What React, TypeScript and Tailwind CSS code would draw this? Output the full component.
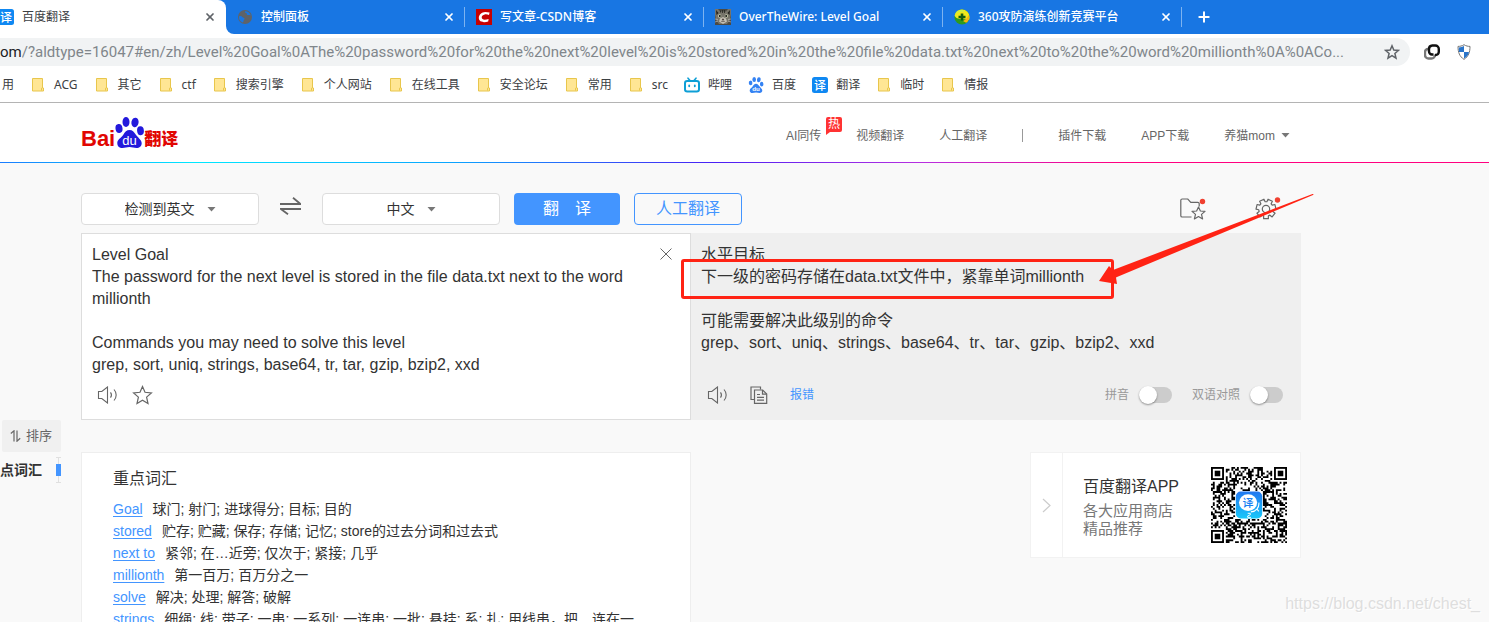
import React from "react";
import { Plus, X } from "lucide-react";

const uiFont = "font-['Noto_Sans','Noto_Sans_CJK_SC',sans-serif]";
const pageFont = "font-['Liberation_Sans','Noto_Sans_CJK_SC',sans-serif]";

/* ---------- Icons ---------- */

function TranslateFavicon() {
  return (
    <svg viewBox="0 0 16 16" className="size-4 shrink-0" aria-hidden="true">
      <rect width="16" height="16" rx="2.5" fill="#0f88f2" />
      <text x="8" y="12.5" textAnchor="middle" fontSize="12" fontWeight="500" fill="#fff" fontFamily="Noto Sans CJK SC">译</text>
    </svg>
  );
}

function GlobeFavicon() {
  return (
    <svg viewBox="0 0 16 16" className="size-4 shrink-0" aria-hidden="true">
      <circle cx="8" cy="8" r="7" fill="#5f6368" />
      <path d="M2 7.500c1.500-.8 2.600-.3 3.300.6.700.9 2 .6 2.200 1.600.2 1-.9 1.200-1 2.200 0 .7-.2 1.200-.7 1.700A6 6 0 0 1 2 7.500ZM8.300 2.200c-1 .9-.2 1.500.8 1.700.9.200.3 1.600 1.300 2 1 .400 1.500-.2 2.500.1.400.1.700.3.900.5A6 6 0 0 0 8.300 2.200Z" fill="#1876e3" />
    </svg>
  );
}

function CsdnFavicon() {
  return (
    <svg viewBox="0 0 16 16" className="size-4 shrink-0" aria-hidden="true">
      <rect width="16" height="16" fill="#c80000" />
      <path d="M13.600 3.600 13 6c-1.500-.6-3-.8-4.300-.5C7 5.900 5.800 7 5.700 8.300c-.1 1.700 1.300 2.400 3 2.400 1.200 0 2.500-.2 3.900-.7L12.200 12.500c-1.300.5-2.600.7-4 .7-3.200 0-5.600-1.700-5.400-4.700C3 5.300 5.800 3 9.200 2.900c1.600 0 3 .2 4.400.7Z" fill="#fff" />
    </svg>
  );
}

function CatFavicon() {
  return (
    <svg viewBox="0 0 16 16" className="size-4 shrink-0" aria-hidden="true">
      <rect width="16" height="16" fill="#4c4a44" />
      <path d="M0 0h3l2 2.500h6L13 0h3v5l-1 6-3 4H4l-3-4-1-6Z" fill="#77746a" />
      <path d="M1 1l2.500 3L1.500 6ZM15 1l-2.500 3 2 2ZM7 1h.8v3H7ZM9 1h.8v3H9ZM5 1.500h.8v2H5Z" fill="#24231f" />
      <path d="M5 9.500 8 8l3 1.500 1 3L8 15l-4-2.500Z" fill="#c4c0b4" />
      <circle cx="4.600" cy="7" r="1.700" fill="#c9cdb0" />
      <circle cx="11.400" cy="7" r="1.700" fill="#c9cdb0" />
      <circle cx="4.800" cy="7" r="1" fill="#111" />
      <circle cx="11.200" cy="7" r="1" fill="#111" />
      <path d="M7 10h2l-1 1.300ZM6 12.500l2-.6 2 .6" fill="#3a2c28" stroke="#3a2c28" strokeWidth=".4" />
      <path d="M0 10l3 .5M0 13l3-1M16 10l-3 .5M16 13l-3-1" stroke="#ddd" strokeWidth=".5" />
    </svg>
  );
}

function Favicon360() {
  return (
    <svg viewBox="0 0 16 16" className="size-4 shrink-0" aria-hidden="true">
      <circle cx="8" cy="8" r="7.600" fill="#2f9a1c" />
      <path d="M8 .4a7.600 7.600 0 0 1 7.600 7.600c0 1-.2 2-.6 3C13 9.500 11 10.500 8 10.300 4.500 10 1.200 9 .6 6.500A7.600 7.600 0 0 1 8 .4Z" fill="#f0e81c" />
      <path d="M8 .8C4.500.8 1.800 3.200 1 6c1.600-3 5.600-3.800 9.500-3C9.500 1.300 8.800.8 8 .8Z" fill="#c8f04a" />
      <path d="M13 13.500c2-2 2.600-5.500 1.600-8-.6 3-2.600 5-5.600 6.500 1 1 3 1.700 4 1.500Z" fill="#f6b40c" />
      <path d="M6.700 4.500h2.600v2.200h2.200v2.600H9.300v2.200H6.700V9.300H4.500V6.700h2.200Z" fill="#155c10" />
    </svg>
  );
}

function FolderIcon() {
  return (
    <svg viewBox="0 0 16 16" className="size-4 shrink-0" aria-hidden="true">
      <path d="M2.500 1.500h10v9.500h1v3h-11Z" fill="#ffe694" stroke="#e8c64c" />
      <path d="M11.500 13.500v-2.300l1-.9" fill="none" stroke="#e8c64c" />
    </svg>
  );
}

function BiliIcon() {
  return (
    <svg viewBox="0 0 16 16" className="size-4 shrink-0" aria-hidden="true" fill="none" stroke="#0e9fd6" strokeWidth="2" strokeLinecap="round">
      <rect x="1" y="4" width="14" height="10.500" rx="2.200" />
      <path d="M4 1.200 6 3.500M12 1.200l-2 2.300" strokeWidth="1.600" />
      <path d="M5.200 8.300v1M10.800 8.300v1" strokeWidth="1.800" />
    </svg>
  );
}

function PawShape({ color }: { color: string }) {
  return (
    <g fill={color}>
      <ellipse cx="4" cy="11.500" rx="3.500" ry="4.500" transform="rotate(-8 4 11.500)" />
      <ellipse cx="11" cy="5" rx="3.500" ry="4.900" />
      <ellipse cx="20" cy="5.400" rx="3.600" ry="4.800" transform="rotate(10 20 5.400)" />
      <ellipse cx="25.500" cy="13.700" rx="3.400" ry="4.500" transform="rotate(-5 25.500 13.700)" />
      <path d="M14.500 13c3 0 4.500 2 6.200 4.600 1.800 2.800 6 5.400 6 8.600 0 3-2.200 4.800-5.200 4.800-2.500 0-4.500-.9-7-.9s-4.500.9-7 .9c-3.300 0-5.300-2-5.200-5 0-3.200 3.700-5 6-8.200C10 15 11.600 13 14.500 13Z" />
    </g>
  );
}

function BaiduIcon() {
  return (
    <svg viewBox="0 0 29 31" className="size-4 shrink-0" aria-hidden="true">
      <PawShape color="#3482f3" />
      <text x="14.500" y="28" textAnchor="middle" fontSize="12" fontWeight="700" fill="#fff" fontFamily="Liberation Sans">du</text>
    </svg>
  );
}

function Caret() {
  return (
    <svg viewBox="0 0 9 5" className="h-[5px] w-[9px] shrink-0" aria-hidden="true">
      <path d="M.5 0h8l-4 4.500Z" fill="#777" />
    </svg>
  );
}

const starPath = "M10.500 1.500 13 7.300l6.400.6-4.800 4.200 1.400 6.400-5.500-3.300L5 18.500l1.400-6.400L1.600 7.900 8 7.300Z";

function StarIcon() {
  return (
    <svg viewBox="0 0 21 20" className="h-5 w-[21px]" aria-hidden="true">
      <path d={starPath} fill="none" stroke="#666" strokeWidth="1.200" />
    </svg>
  );
}

function SpeakerIcon() {
  return (
    <svg viewBox="0 0 21 18" className="h-[18px] w-[21px]" aria-hidden="true" fill="none" stroke="#666" strokeWidth="1.100">
      <path d="M1.500 5.500h3.300L10.500 1v16l-5.700-4.500H1.500Z" />
      <path d="M13.500 6.300c1.200 1.600 1.200 3.800 0 5.400M17 3.500c2.900 3.200 2.900 7.800 0 11" />
    </svg>
  );
}

function CopyIcon() {
  return (
    <svg viewBox="0 0 18 18" className="size-[18px]" aria-hidden="true" fill="none" stroke="#666" strokeWidth="1.200">
      <path d="M4 13.500H1V1h9.500v2.500" />
      <path d="M4.500 4h8.200l4 4v9.300H4.500Z" />
      <path d="M12.500 4v4.200h4M7 8.500h3M7 11.300h7M7 14.200h7" />
    </svg>
  );
}

function FolderStarIcon() {
  return (
    <svg viewBox="0 0 27 22" className="h-[22px] w-[27px]" aria-hidden="true" fill="none" stroke="#666" strokeWidth="1.200">
      <path d="M11.500 19H2.200C1.300 19 .8 18.500.8 17.700V2.300C.8 1.500 1.300 1 2.200 1h5.600l3 3.300h7c.9 0 1.400.5 1.400 1.300v2.900" />
      <path d="m18.500 9 1.900 4 4.600.4-3.500 3 1.100 4.500-4.100-2.400-4.100 2.400 1.100-4.500-3.500-3 4.600-.4Z" strokeLinejoin="round" />
      <circle cx="22.500" cy="3.500" r="2.700" fill="#f04030" stroke="none" />
    </svg>
  );
}

/* Seven-toothed gear outline, computed once. */
function gearPath() {
  const pts: string[] = [];
  for (let i = 0; i < 7; i++) {
    const base = -Math.PI / 2 + Math.PI / 7 + (i * 2 * Math.PI) / 7;
    const corners: [number, number][] = [[-0.33, 7.3], [-0.24, 10], [0.24, 10], [0.33, 7.3]];
    for (const [a, r] of corners) {
      pts.push(`${(11 + r * Math.cos(base + a)).toFixed(2)} ${(12 + r * Math.sin(base + a)).toFixed(2)}`);
    }
  }
  return `M${pts.join("L")}Z`;
}

function GearIcon() {
  return (
    <svg viewBox="0 0 27 24" className="h-6 w-[27px]" aria-hidden="true" fill="none" stroke="#666" strokeWidth="1.200" strokeLinejoin="round">
      <path d={gearPath()} />
      <circle cx="11" cy="12" r="3.700" />
      <circle cx="22.500" cy="3" r="2.700" fill="#f04030" stroke="none" />
    </svg>
  );
}

/* ---------- Browser chrome ---------- */

const tabs = [
  { title: "控制面板", icon: <GlobeFavicon /> },
  { title: "写文章-CSDN博客", icon: <CsdnFavicon /> },
  { title: "OverTheWire: Level Goal", icon: <CatFavicon /> },
  { title: "360攻防演练创新竞赛平台", icon: <Favicon360 /> },
];

function TabStrip() {
  return (
    <div className="flex h-[34px] text-xs" role="tablist">
      <div className="w-[226px] shrink-0 bg-[#1876e3]">
        <div role="tab" aria-selected="true" className="flex h-full items-center gap-2 rounded-tr-lg bg-white pr-[10px] text-[#3c4043]">
          <span className="flex w-[14px] shrink-0 justify-end overflow-hidden"><TranslateFavicon /></span>
          <span className="flex-1 truncate">百度翻译</span>
          <button aria-label="关闭"><X size={12} strokeWidth={3.500} color="#5f6368" /></button>
        </div>
      </div>
      <div className="flex-1 bg-white">
        <div className="flex h-full items-center rounded-bl-lg bg-[#1876e3] text-white">
          {tabs.map((t) => (
            <div key={t.title} role="tab" aria-selected="false" className="flex h-5 w-[239px] items-center gap-2 border-r border-[#7db3f0] pr-[9px] pl-[11px]">
              {t.icon}
              <span className="flex-1 truncate font-medium">{t.title}</span>
              <button aria-label="关闭"><X size={12} strokeWidth={3.500} /></button>
            </div>
          ))}
          <button aria-label="新标签页" className="ml-[14px]"><Plus size={16} strokeWidth={3} /></button>
        </div>
      </div>
    </div>
  );
}

const url =
  "/?aldtype=16047#en/zh/Level%20Goal%0AThe%20password%20for%20the%20next%20level%20is%20stored%20in%20the%20file%20data.txt%20next%20to%20the%20word%20millionth%0A%0ACo...";

function AddressBar() {
  return (
    <div className="flex h-9 items-center bg-white">
      <div className="flex h-7 flex-1 items-center rounded-r-full bg-[#f1f3f4] pr-[10px] font-['Roboto',sans-serif] text-[15px]">
        <label htmlFor="url" className="text-[#202124]">om</label>
        <input id="url" className="min-w-0 flex-1 bg-transparent text-[#80868b] outline-none" defaultValue={url} />
        <button aria-label="收藏" className="ml-2">
          <svg viewBox="0 0 16 16" className="size-4">
            <path d="M8 1.800 9.800 6l4.700.4-3.600 3.100 1.100 4.600L8 11.700 4 14.100l1.100-4.600L1.500 6.400 6.200 6Z" fill="none" stroke="#5f6368" strokeWidth="1.500" />
          </svg>
        </button>
      </div>
      <div className="flex w-[79px] items-center gap-4 pl-[14px]">
        <svg viewBox="0 0 16 16" className="size-4" fill="none" strokeWidth="2.400" aria-hidden="true">
          <path d="M4.500 5H4a3 3 0 0 0-3 3v3a3.500 3.500 0 0 0 3.500 3.500h3A3.500 3.500 0 0 0 11 11v-.5" stroke="#777" />
          <path d="M11 11h.5A3.300 3.300 0 0 0 14.800 8V5a3.500 3.500 0 0 0-3.500-3.500h-3A3.500 3.500 0 0 0 5 5v2.500A3 3 0 0 0 8 10.500h1.500" stroke="#111" />
        </svg>
        <svg viewBox="0 0 16 16" className="size-4" aria-hidden="true">
          <path d="M8 .7c2 1.300 4 1.700 6 1.700 0 6-1.500 10-6 13-4.500-3-6-7-6-13 2 0 4-.4 6-1.700Z" fill="#fff" stroke="#777" />
          <path d="M8 2v6H3C2.800 6.600 2.700 5 2.800 3.400 4.800 3.300 6.500 2.900 8 2ZM8 8h5c-.6 2.700-2 4.800-5 6.600Z" fill="#2a74c8" />
        </svg>
      </div>
    </div>
  );
}

const bookmarks: { name: string; icon?: React.ReactNode }[] = [
  { name: "ACG" }, { name: "其它" }, { name: "ctf" }, { name: "搜索引擎" }, { name: "个人网站" },
  { name: "在线工具" }, { name: "安全论坛" }, { name: "常用" }, { name: "src" },
  { name: "哔哩", icon: <BiliIcon /> }, { name: "百度", icon: <BaiduIcon /> },
  { name: "翻译", icon: <TranslateFavicon /> }, { name: "临时" }, { name: "情报" },
];

function Bookmarks() {
  return (
    <nav className="flex h-[33px] items-center gap-4 border-b border-[#b4b4b4] bg-white pb-0.5 pl-0.5 text-xs whitespace-nowrap text-[#3c4043]">
      <a href="#apps">用</a>
      {bookmarks.map((b) => (
        <a key={b.name} href="#bookmark" className="flex items-center gap-2">
          {b.icon ?? <FolderIcon />}
          {b.name}
        </a>
      ))}
    </nav>
  );
}

/* ---------- Page ---------- */

function Logo() {
  return (
    <a href="#home" aria-label="百度翻译" className="flex items-end font-bold text-[#e10602]">
      <span className="text-[22px] leading-[18px]">Bai</span>
      <svg viewBox="0 0 29 31" className="h-[31px] w-[29px]">
        <PawShape color="#2319dc" />
        <text x="14.500" y="27.500" textAnchor="middle" fontSize="13" fontWeight="400" fill="#fff" fontFamily="Liberation Sans">du</text>
      </svg>
      <span className="text-[17px] leading-[17px] font-black">翻译</span>
    </a>
  );
}

function SiteHeader() {
  return (
    <header className="bg-white">
      <div className="ml-[81px] flex h-[59px] max-w-[1220px] items-center justify-between">
        <Logo />
        <nav className="flex items-center gap-[35px] pt-1.5 pr-[11px] text-xs text-[#666]">
          <a href="#ai" className="relative">
            AI同传
            <span className="absolute -top-[11px] left-10 rounded-[2px] rounded-bl-none bg-[#ff3333] px-0.5 text-[12px] leading-[15px] text-white">
              热
              <svg viewBox="0 0 4 3" className="absolute top-full left-0 h-[3px] w-1" aria-hidden="true"><path d="M0 0h4L0 3Z" fill="#ff3333" /></svg>
            </span>
          </a>
          <a href="#video">视频翻译</a>
          <a href="#human">人工翻译</a>
          <span className="h-[13px] w-px bg-[#999]" />
          <a href="#plugin">插件下载</a>
          <a href="#app">APP下载</a>
          <button className="flex items-center gap-1.5">养猫mom <Caret /></button>
        </nav>
      </div>
      <div className="h-px bg-[linear-gradient(90deg,#1a7cff_0%,#00e8ff_13%,#0aa6ff_30%,#4a20f5_48%,#b82fe0_62%,#ff0080_75%,#ff0080_100%)]" />
    </header>
  );
}

function LanguageSelect({ label, options }: { label: string; options: string[] }) {
  return (
    <label className="flex h-8 w-[178px] items-center justify-center gap-3 rounded border border-[#ddd] bg-white text-sm text-[#333]">
      <select aria-label={label} className="appearance-none bg-transparent outline-none [field-sizing:content]">
        {options.map((o) => <option key={o}>{o}</option>)}
      </select>
      <Caret />
    </label>
  );
}

function Toolbar() {
  return (
    <div className="flex h-8 items-center">
      <LanguageSelect label="源语言" options={["检测到英文"]} />
      <button aria-label="交换语言" className="mx-[21px] pb-1.5">
        <svg viewBox="0 0 21 18" className="h-[18px] w-[21px]" fill="none" stroke="#666" strokeWidth="1.800">
          <path d="M0 7h20.500L13 .7M21 12H.8L8 17.300" />
        </svg>
      </button>
      <LanguageSelect label="目标语言" options={["中文"]} />
      <button className="ml-[14px] h-8 w-[106px] rounded bg-[#4395ff] text-base text-white">翻　译</button>
      <button className="ml-[14px] h-8 w-[108px] rounded border border-[#4395ff] text-base text-[#4395ff]">人工翻译</button>
      <div className="ml-auto flex items-center gap-12 pr-[19px]">
        <button aria-label="收藏夹"><FolderStarIcon /></button>
        <button aria-label="设置"><GearIcon /></button>
      </div>
    </div>
  );
}

function Toggle({ label }: { label: string }) {
  return (
    <label className="flex items-center gap-[10px]">
      {label}
      <input
        type="checkbox"
        role="switch"
        className="h-4 w-[33px] appearance-none rounded-full bg-[#ccc] before:-mt-px before:block before:size-[18px] before:rounded-full before:bg-white before:shadow-[0_1px_2px_rgba(0,0,0,0.4)]"
      />
    </label>
  );
}

const source = `Level Goal
The password for the next level is stored in the file data.txt next to the word millionth

Commands you may need to solve this level
grep, sort, uniq, strings, base64, tr, tar, gzip, bzip2, xxd`;

function Panels() {
  return (
    <div className="mt-2 grid grid-cols-2 text-base leading-[22px] text-[#333]">
      <section className="flex flex-col border border-[#ddd] bg-white pt-[10px] pr-[18px] pb-[14px] pl-[10px]">
        <div className="flex items-start">
          <textarea aria-label="原文" rows={6} className="flex-1 resize-none overflow-hidden pr-8 outline-none" defaultValue={source} />
          <button aria-label="清空" className="pt-1">
            <svg viewBox="0 0 12 12" className="size-3"><path d="m.5.5 11 11m0-11-11 11" stroke="#666" /></svg>
          </button>
        </div>
        <div className="mt-auto flex items-center gap-[14px] pl-[5px]">
          <button aria-label="朗读原文"><SpeakerIcon /></button>
          <button aria-label="收藏原文"><StarIcon /></button>
        </div>
      </section>
      <section className="relative flex flex-col bg-[#efefef] px-[10px] pt-[11px] pb-[15px]">
        <p>水平目标</p>
        <p>下一级的密码存储在data.txt文件中，紧靠单词millionth</p>
        <p className="pt-[22px]">可能需要解决此级别的命令</p>
        <p>grep、sort、uniq、strings、base64、tr、tar、gzip、bzip2、xxd</p>
        <div className="mt-[31px] flex items-center pr-2 pl-1.5 text-xs leading-5 text-[#999]">
          <button aria-label="朗读译文"><SpeakerIcon /></button>
          <button aria-label="复制" className="ml-[22px]"><CopyIcon /></button>
          <a href="#report" className="ml-[22px] text-[#4395ff]">报错</a>
          <div className="ml-auto flex gap-5">
            <Toggle label="拼音" />
            <Toggle label="双语对照" />
          </div>
        </div>
        <div className="absolute top-[26px] -left-[10px] h-10 w-[433px] rounded-[3px] border-3 border-[#ff2314]" />
        <svg viewBox="0 0 216 91" className="absolute -top-10 left-[408px] h-[91px] w-[216px]" aria-hidden="true">
          <path d="M0 88 10 73l4 4L213.500 1q2-.5.5 1L18 84l-1 .500 1 6.500Z" fill="#ff2314" />
        </svg>
      </section>
    </div>
  );
}

const words: [string, string][] = [
  ["Goal", "球门; 射门; 进球得分; 目标; 目的"],
  ["stored", "贮存; 贮藏; 保存; 存储; 记忆; store的过去分词和过去式"],
  ["next to", "紧邻; 在…近旁; 仅次于; 紧接; 几乎"],
  ["millionth", "第一百万; 百万分之一"],
  ["solve", "解决; 处理; 解答; 破解"],
  ["strings", "细绳; 线; 带子; 一串; 一系列; 一连串; 一批; 悬挂; 系; 扎; 用线串，把…连在一"],
];

function Keywords() {
  return (
    <section className="w-1/2 border border-[#eee] bg-white pt-[15px] pl-[31px] text-sm leading-[22px] text-[#333]">
      <h2 className="mb-2 text-base leading-[22px]">重点词汇</h2>
      <ul>
        {words.map(([w, meaning]) => (
          <li key={w} className="flex gap-[10px] whitespace-nowrap">
            <a href="#word" className="text-[#4395ff] underline underline-offset-2">{w}</a>
            <span>{meaning}</span>
          </li>
        ))}
      </ul>
    </section>
  );
}

const N = 41;

function inFinder(x: number, y: number) {
  return (x < 8 && y < 8) || (x >= N - 8 && y < 8) || (x < 8 && y >= N - 8);
}

function qrPath() {
  let d = "";
  let s = 20231;
  for (let y = 0; y < N; y++) {
    for (let x = 0; x < N; x++) {
      s = (s * 1103515245 + 12345) % 2147483648;
      const center = Math.abs(x - 20) < 8 && Math.abs(y - 20) < 8;
      if (!inFinder(x, y) && !center && (s >> 12) % 100 < 52) d += `M${x} ${y}h1v1h-1Z`;
    }
  }
  return d;
}

function QrCode() {
  return (
    <svg viewBox="0 0 41 41" className="size-[76px] shrink-0" role="img" aria-label="二维码">
      <defs>
        <linearGradient id="appIcon" x1="0" y1="0" x2="0" y2="1">
          <stop offset="0" stopColor="#2277f0" />
          <stop offset="1" stopColor="#18c8fa" />
        </linearGradient>
      </defs>
      <path d={qrPath()} fill="#000" />
      {[[0, 0], [34, 0], [0, 34]].map(([x, y]) => (
        <g key={`${x}-${y}`}>
          <rect x={x + 0.5} y={y + 0.5} width="6" height="6" fill="#fff" stroke="#000" />
          <rect x={x + 2} y={y + 2} width="3" height="3" />
        </g>
      ))}
      <rect x="13.400" y="13.200" width="14.200" height="14.600" rx="2.600" fill="url(#appIcon)" />
      <ellipse cx="20" cy="19.200" rx="4.900" ry="4.500" fill="#fff" />
      <path d="M21.500 24.200c3-.2 4.600-2.500 4.300-5M24.600 22.500l1.200 1.400" fill="none" stroke="#fff" strokeWidth=".6" />
      <text x="20" y="21.400" textAnchor="middle" fontSize="6" fontWeight="500" fill="#1d82f2" fontFamily="Noto Sans CJK SC">译</text>
      <path d="M19.800 25h1.400v.8l-1.400.6v.8h1.800" fill="none" stroke="#fff" strokeWidth=".5" />
    </svg>
  );
}

function AppCard() {
  return (
    <aside className="flex h-[106px] w-[271px] border border-[#f2f2f2] bg-white">
      <button aria-label="收起" className="flex w-8 items-center justify-center border-r border-[#f2f2f2]">
        <svg viewBox="0 0 9 15" className="h-[15px] w-[9px]"><path d="m1 1 7 6.500L1 14" fill="none" stroke="#ccc" strokeWidth="1.200" /></svg>
      </button>
      <div className="flex flex-1 items-center justify-between pr-[13px] pl-5">
        <div className="pt-1 text-[15px] leading-[18px] text-[#777]">
          <h2 className="mb-1 text-base leading-[22px] text-[#333]">百度翻译APP</h2>
          <p>各大应用商店</p>
          <p>精品推荐</p>
        </div>
        <QrCode />
      </div>
    </aside>
  );
}

function SideNav() {
  return (
    <aside className="w-[81px] shrink-0 pt-[257px]">
      <button className="ml-0.5 flex h-8 w-[59px] items-center gap-[5px] rounded-[2px] bg-[#f0f0f0] pl-2 text-[13px] text-[#666]">
        <svg viewBox="0 0 11 12" className="h-3 w-[11px]" fill="none" stroke="#666" strokeWidth="1.200" aria-hidden="true">
          <path d="M.8 3.500 4 .8V11.500M7 .5v10.700l3.200-3" />
        </svg>
        排序
      </button>
      <a href="#words" className="mt-1 flex h-7 w-[61px] items-center justify-between text-sm font-bold text-[#333]">
        点词汇
        <svg viewBox="0 0 5 26" className="h-[26px] w-[5px]" aria-hidden="true">
          <path d="M0 .5h5M0 25.500h5M2.500 0v26" stroke="#e0e0e0" />
          <path d="M0 7h5v12H0Z" fill="#4395ff" />
        </svg>
      </a>
    </aside>
  );
}

export default function App() {
  return (
    <div lang="zh-CN" className={`relative flex h-screen flex-col overflow-hidden bg-[#f9f9f9] ${pageFont}`}>
      <div className={`shrink-0 ${uiFont}`}>
        <TabStrip />
        <AddressBar />
        <Bookmarks />
      </div>
      <SiteHeader />
      <main className="flex min-h-0 flex-1 overflow-hidden">
        <SideNav />
        <div className="max-w-[1220px] flex-1 pt-[30px]">
          <Toolbar />
          <Panels />
          <div className="mt-8 flex items-start justify-between">
            <Keywords />
            <AppCard />
          </div>
        </div>
      </main>
      <p className="absolute right-[9px] bottom-[7px] text-base leading-[22px] text-[#dedede] [text-shadow:1px_1px_0_#fff]">
        https://blog.csdn.net/chest_
      </p>
    </div>
  );
}
